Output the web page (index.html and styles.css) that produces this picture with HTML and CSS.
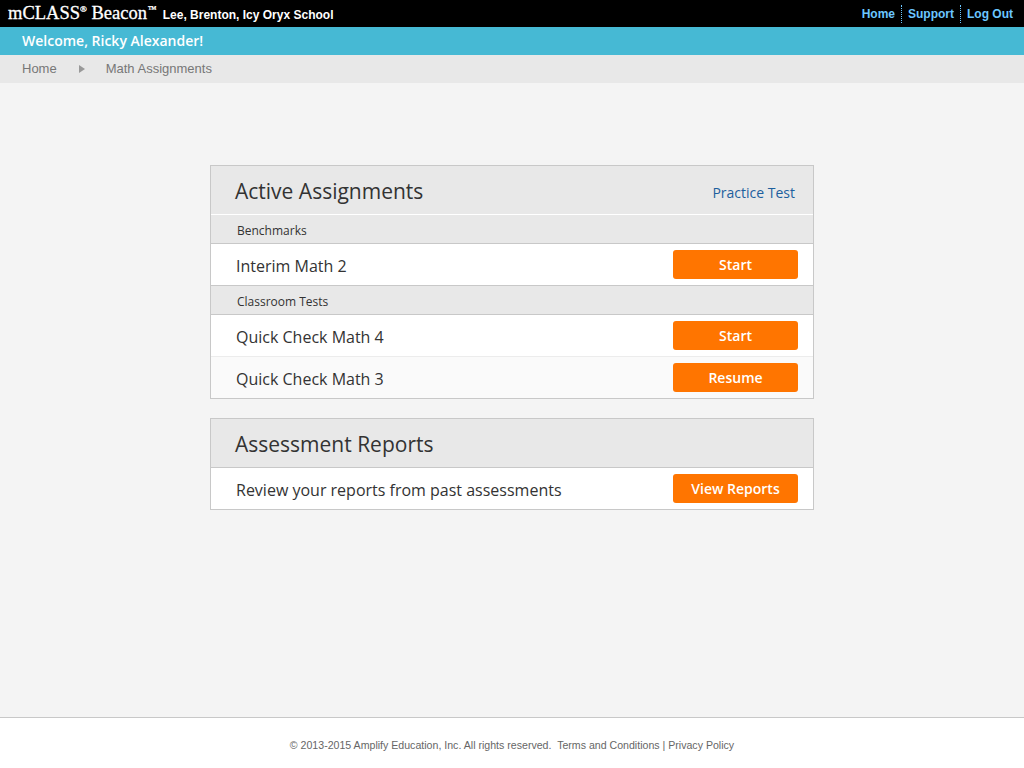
FILE: index.html
```html
<!DOCTYPE html>
<html>
<head>
<meta charset="utf-8">
<link rel="stylesheet" href="styles.css">
</head>
<body>
<div class="page">
  <header class="topbar">
    <div class="brand">
      <span class="logo">mCLASS<sup class="reg">®</sup> Beacon<sup class="tm">™</sup></span>
      <span class="school">Lee, Brenton, Icy Oryx School</span>
    </div>
    <nav class="toplinks">
      <a class="toplink">Home</a>
      <a class="toplink sep">Support</a>
      <a class="toplink sep">Log Out</a>
    </nav>
  </header>
  <div class="welcome">Welcome, Ricky Alexander!</div>
  <div class="crumbs">
    <span class="crumb">Home</span>
    <span class="crumb-arrow"></span>
    <span class="crumb">Math Assignments</span>
  </div>
  <main class="main">
    <section class="card">
      <div class="card-head">
        <h2 class="card-title">Active Assignments</h2>
        <a class="practice">Practice Test</a>
      </div>
      <div class="section-label">Benchmarks</div>
      <div class="row">
        <span class="row-text">Interim Math 2</span>
        <button class="btn">Start</button>
      </div>
      <div class="section-label top-border">Classroom Tests</div>
      <div class="row">
        <span class="row-text">Quick Check Math 4</span>
        <button class="btn">Start</button>
      </div>
      <div class="row alt">
        <span class="row-text">Quick Check Math 3</span>
        <button class="btn">Resume</button>
      </div>
    </section>
    <section class="card">
      <div class="card-head dark-border">
        <h2 class="card-title">Assessment Reports</h2>
      </div>
      <div class="row">
        <span class="row-text">Review your reports from past assessments</span>
        <button class="btn">View Reports</button>
      </div>
    </section>
  </main>
  <footer class="footer">© 2013-2015 Amplify Education, Inc. All rights reserved.&nbsp; Terms and Conditions | Privacy Policy</footer>
</div>
</body>
</html>
```
FILE: styles.css
```css
* { box-sizing: border-box; }
html, body { margin: 0; padding: 0; }
body { font-family: "Open Sans", "Liberation Sans", sans-serif; background: #f4f4f4; }
.page { min-height: 768px; display: flex; flex-direction: column; }

.topbar {
  height: 27px; background: #000; display: flex; align-items: center;
  justify-content: space-between; padding: 0 11px 0 8px;
}
.brand { display: flex; align-items: baseline; }
.logo {
  font-family: "Liberation Serif", serif; color: #fff; font-size: 18.5px;
  line-height: 27px; -webkit-text-stroke: 0.3px #fff;
}
.logo sup { font-size: 9px; vertical-align: 7px; line-height: 0; }
.logo .tm { margin-left: 1px; }
.school {
  font-family: "Liberation Sans", Arial, sans-serif; font-weight: bold; color: #fff;
  font-size: 12px; margin-left: 6px;
}
.toplinks { display: flex; align-items: center; }
.toplink {
  font-family: "Liberation Sans", Arial, sans-serif; font-weight: bold; font-size: 12px;
  color: #6cc6ff; padding: 0 6px; line-height: 18px;
}
.toplink.sep { border-left: 1px dotted #6cc6ff; }
.toplink:last-child { padding-right: 0; }

.welcome {
  height: 28px; background: #46b9d4; color: #fff; font-weight: 600; font-size: 14px;
  padding-left: 22px; line-height: 28px;
}
.crumbs {
  height: 28px; background: #e8e8e8; display: flex; align-items: center; padding-left: 22px;
  font-family: "Liberation Sans", Arial, sans-serif; font-size: 13px; color: #777;
  padding-bottom: 1px;
}
.crumb-arrow {
  width: 0; height: 0; border-left: 6px solid #999; border-top: 4px solid transparent;
  border-bottom: 4px solid transparent; margin: 1px 21px 0 22px;
}

.main {
  flex: 1; display: flex; flex-direction: column; align-items: center; padding-top: 82px; gap: 19px;
}
.card { width: 604px; border: 1px solid #c8c8c8; background: #fff; }
.card-head {
  height: 49px; background: #e8e8e8; border-bottom: 1px solid #fff;
  display: flex; align-items: center; justify-content: space-between; padding: 2px 18px 0 24px;
}
.card-head.dark-border { border-bottom-color: #c8c8c8; }
.card-title { margin: 0; font-weight: 400; font-size: 21px; color: #333; }
.practice { font-size: 14px; color: #1d5f9e; margin-top: 3px; }
.section-label {
  height: 29px; background: #e8e8e8; border-bottom: 1px solid #c8c8c8;
  font-size: 12px; color: #333; padding-left: 26px; line-height: 31px;
}
.section-label.top-border { border-top: 1px solid #c8c8c8; height: 30px; }
.row {
  height: 41px; display: flex; align-items: center; justify-content: space-between;
  padding: 2px 15px 0 25px; background: #fff;
}
.row .btn { margin-top: -2px; }
.row.alt { background: #fafafa; border-top: 1px solid #ececec; height: 42px; }
.row-text { font-size: 16px; color: #333; }
.btn {
  width: 125px; height: 29px; background: #ff7500; color: #fff; border: none; border-radius: 3px;
  font-family: "Open Sans", sans-serif; font-weight: 600; font-size: 14px; padding: 0;
}

.footer {
  height: 51px; background: #fff; border-top: 1px solid #c8c8c8; text-align: center;
  font-family: "Liberation Sans", Arial, sans-serif; font-size: 10.6px; color: #666;
  line-height: 55px;
}
```
